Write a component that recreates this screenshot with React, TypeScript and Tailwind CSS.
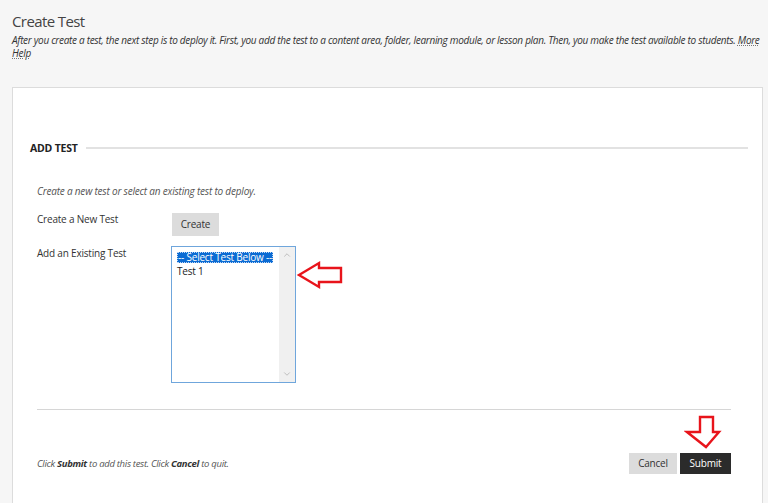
import React from "react";
import { ChevronUp, ChevronDown } from "lucide-react";

const FONT = "font-['Open_Sans',_'Liberation_Sans',_sans-serif]";
// the reference renders a bit narrower than Open Sans, so small text is tightened
const SMALL = "text-[10px] tracking-[-0.2px]";

function LeftArrow() {
    return (
        <svg className="absolute left-[296px] top-[260px]" width="48" height="30" viewBox="296 260 48 30">
            <polygon
                points="299,275 319,263 319,268 341,268 341,282 319,282 319,287"
                fill="white"
                stroke="#e8141b"
                strokeWidth="2.4"
            />
        </svg>
    );
}

function DownArrow() {
    return (
        <svg className="absolute left-[684px] top-[414px]" width="38" height="36" viewBox="684 414 38 36">
            <polygon
                points="700,417 713,417 713,432 719,432 706,447 687,432 700,432"
                fill="white"
                stroke="#e8141b"
                strokeWidth="2.4"
            />
        </svg>
    );
}

function TestList() {
    return (
        <div className="flex w-[125px] h-[137px] border border-[#6fa6dc] bg-white">
            <div className={`flex-1 pt-[5px] pl-[5px] ${SMALL} leading-[11px] text-[#222]`}>
                <div className="inline-block whitespace-nowrap bg-[#0b6bd3] text-white px-[1px] outline outline-1 outline-dotted outline-[#bcd6f5] -outline-offset-1">
                    -- Select Test Below --
                </div>
                <div className="pt-[3px]">Test 1</div>
            </div>
            <div className="w-[16px] bg-[#f0f0f0] flex flex-col justify-between items-center py-[3px]">
                <ChevronUp size={10} className="text-[#b5b5b5]" strokeWidth={2} />
                <ChevronDown size={10} className="text-[#b5b5b5]" strokeWidth={2} />
            </div>
        </div>
    );
}

export default function App() {
    return (
        <div className={`${FONT} relative w-[768px] h-[503px] overflow-hidden bg-[#f6f6f6] text-[#333]`}>
            <div className="pl-[12px] pt-[10px]">
                <h1 className="text-[15px] tracking-[-0.6px] leading-[22px] text-[#444]">Create Test</h1>
                <p className="italic text-[10px] tracking-[-0.3px] leading-[13px] text-[#333] mt-[2px] whitespace-nowrap">
                    After you create a test, the next step is to deploy it. First, you add the test to a content area, folder, learning module, or lesson plan. Then, you make the test available to students.{" "}
                    <span className="underline decoration-dotted decoration-[#777] underline-offset-1">More</span>
                    <br />
                    <span className="underline decoration-dotted decoration-[#777] underline-offset-1">Help</span>
                </p>
            </div>

            <div className="ml-[12px] mt-[27px] w-[751px] h-[440px] border border-[#dcdcdc] bg-white">
                <div className="flex items-center gap-[8px] pl-[17px] pr-[14px] pt-[52px]">
                    <span className="text-[10.5px] tracking-[-0.2px] leading-[16px] font-bold text-[#222]">ADD TEST</span>
                    <div className="flex-1 h-[2px] bg-[#e2e2e2]" />
                </div>

                <div className="pl-[24px] pr-[31px]">
                    <p className={`italic ${SMALL} leading-[14px] text-[#555] mt-[28px]`}>
                        Create a new test or select an existing test to deploy.
                    </p>

                    <div className="flex mt-[15px]">
                        <div className={`w-[135px] ${SMALL} leading-[12px]`}>Create a New Test</div>
                        <button className={`w-[47px] h-[23px] bg-[#dcdcdc] ${SMALL} text-[#333]`}>Create</button>
                    </div>

                    <div className="flex mt-[10px]">
                        <div className={`w-[134px] ${SMALL} leading-[14px]`}>Add an Existing Test</div>
                        <TestList />
                    </div>

                    <div className="h-[1px] bg-[#d6d6d6] mt-[26px]" />

                    <div className="flex items-center justify-between mt-[43px]">
                        <p className="italic text-[9.5px] tracking-[-0.3px] leading-[14px] text-[#555]">
                            Click <b className="text-[#333]">Submit</b> to add this test. Click <b className="text-[#333]">Cancel</b> to quit.
                        </p>
                        <div className="flex gap-[3px]">
                            <button className={`w-[48px] h-[21px] bg-[#dcdcdc] ${SMALL} text-[#333]`}>Cancel</button>
                            <button className={`w-[51px] h-[21px] bg-[#2b2b2b] ${SMALL} text-white`}>Submit</button>
                        </div>
                    </div>
                </div>
            </div>

            <LeftArrow />
            <DownArrow />
        </div>
    );
}
